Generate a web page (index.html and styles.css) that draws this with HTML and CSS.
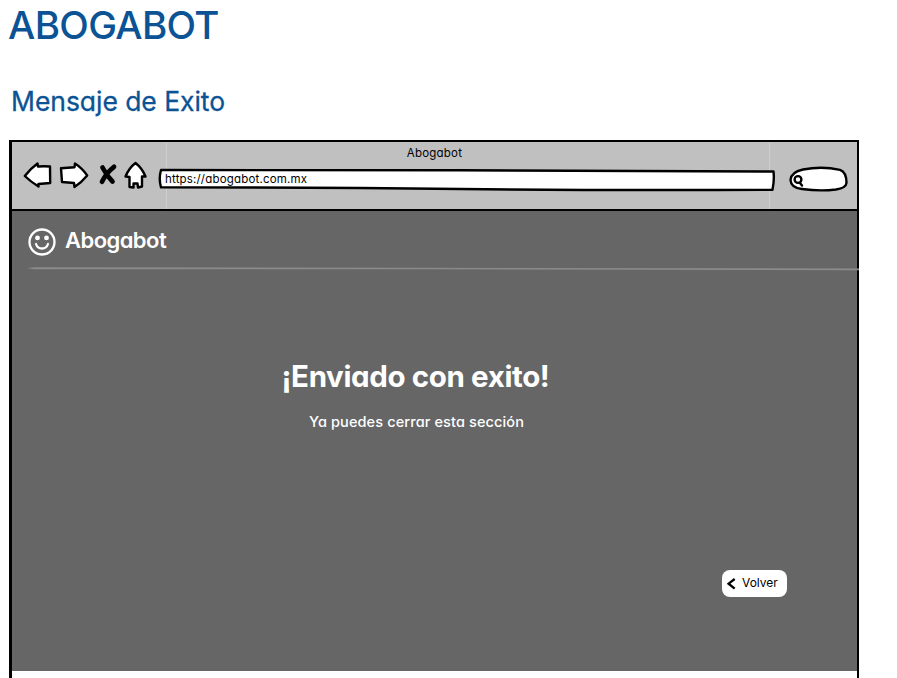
FILE: index.html
```html
<!DOCTYPE html>
<html lang="es">
<head>
<meta charset="utf-8">
<title>Abogabot</title>
<link rel="stylesheet" href="styles.css">
</head>
<body>
<h1 class="doc-title"><span>ABOGABOT</span></h1>
<h2 class="doc-subtitle"><span>Mensaje de Exito</span></h2>
<main class="window">
  <header class="chrome">
    <div class="window-title"><span>Abogabot</span></div>
    <div class="toolbar">
      <svg class="back" width="30" height="32" viewBox="22 160 30 32"><path d="M37.500 163.500 L38 166.500 Q44 166 50 166.500 L50.200 183 L38.500 184 L38.500 186.500 Q31 182 24.800 176 Q30 169 37.500 163.500Z"/></svg>
      <svg class="forward" width="30" height="32" viewBox="59 160 30 32"><path d="M75 163.500 L74.500 167.200 L61 168.200 L62 182 L74 183 L74.500 187 Q81 183 87.200 175.500 Q82 168 75 163.500Z"/></svg>
      <svg class="stop" width="20" height="32" viewBox="98 160 20 32"><path d="M102.500 167.500 Q107 176 112.500 181.500 M114 166.800 Q106 173 102 181.800"/></svg>
      <svg class="home" width="25" height="32" viewBox="123 160 25 32"><path d="M135.500 163 Q129 168 125.500 176.500 L129.500 177 L129.500 187 L133.500 187.500 L133.500 183.500 L137.500 183.500 L138 187.500 L142 186.500 L142 176.500 L145.500 176.500 Q142 168 135.500 163Z"/></svg>
      <div class="address">
        <svg width="618" height="32" viewBox="158 160 618 32"><path d="M161 170 Q310 170 460 170.300 T773.500 171.500 Q774.500 180 772.500 189.800 Q600 190.500 460 189 T161 187.300 Q158.500 179 161 170Z"/></svg>
        <span class="url">https://abogabot.com.mx</span>
      </div>
      <svg class="search" width="60" height="32" viewBox="789 160 60 32"><path d="M803 169.500 Q822 166 840 169.800 Q846.500 172 846.500 183 Q846 188 836 189.500 Q820 191.500 802 189 Q791 188 790.500 180 Q791 172 803 169.500Z"/><circle cx="798" cy="179.500" r="3.400"/><path d="M800 183 L802 185.500"/></svg>
    </div>
  </header>
  <section class="page">
    <div class="brand">
      <svg class="smile" width="28" height="28" viewBox="0 0 28 28"><circle cx="14" cy="14" r="12.500"/><path d="M8 16 Q9.500 20.500 14 20.500 T20 16"/><circle class="eye" cx="9.500" cy="9.900" r="2.400"/><circle class="eye" cx="18.500" cy="9.900" r="2.400"/></svg>
      <span class="brand-name">Abogabot</span>
    </div>
    <svg class="rule" width="832" height="5" viewBox="27 266 832 5"><path d="M27 268 L34 267.200 L420 267.800 L859 268.500 L859 270.300 L420 269.300 L34 269.200Z"/></svg>
    <div class="message">
      <h3 class="headline"><span>¡Enviado con exito!</span></h3>
      <p class="detail"><span>Ya puedes cerrar esta sección</span></p>
    </div>
    <div class="actions">
      <button class="volver"><svg width="9" height="12" viewBox="0 0 9 12"><path d="M7.700 1 L1.600 5.700 L7.700 10.700"/></svg><span>Volver</span></button>
    </div>
  </section>
</main>
</body>
</html>
```
FILE: styles.css
```css
* { box-sizing: border-box; }
html { overflow: hidden; }
body {
  margin: 0;
  height: 678px;
  overflow: hidden;
  background: #fff;
  font-family: Inter, "Open Sans", sans-serif;
  font-feature-settings: "cv11" 1;
}
h1, h2, h3, p { margin: 0; font-weight: 400; white-space: nowrap; }
svg { display: block; flex: none; }
.doc-title {
  height: 50px;
  padding-left: 8px;
  font-size: 38.500px;
  font-weight: 500;
  line-height: 51px;
  letter-spacing: -0.650px;
  color: #0b5394;
}
.doc-subtitle {
  height: 40px;
  margin-top: 31px;
  padding-left: 11px;
  font-size: 26.500px;
  line-height: 40px;
  letter-spacing: -0.050px;
  color: #0b5394;
  -webkit-text-stroke: 0.300px #0b5394;
}
.window {
  width: 850px;
  height: 560px;
  margin: 19px 0 0 9px;
  border: solid #000;
  border-width: 2px 2px 0 3px;
}
.chrome {
  height: 69px;
  border-bottom: 2px solid #000;
  background:
    linear-gradient(#cecece, #cecece) 154px 0 / 1px 100% no-repeat,
    linear-gradient(#cecece, #cecece) 757px 0 / 1px 100% no-repeat,
    #c0c0c0;
}
.window-title {
  height: 18px;
  padding-top: 3px;
  font-size: 11.500px;
  line-height: 16px;
  letter-spacing: 0.200px;
  text-align: center;
}
.toolbar { display: flex; padding-left: 10px; }
.toolbar path, .toolbar circle {
  fill: #fff;
  stroke: #000;
  stroke-width: 2.400;
  stroke-linejoin: round;
  stroke-linecap: round;
}
.forward { margin-left: 7px; }
.stop { margin-left: 9px; }
.toolbar .stop path { stroke-width: 4.700; fill: none; }
.home { margin-left: 5px; }
.address { display: grid; margin-left: 10px; }
.address > * { grid-area: 1 / 1; }
.url {
  padding: 11px 0 0 7px;
  font-size: 11.500px;
  line-height: 17px;
  letter-spacing: 0.180px;
}
.search { margin-left: 13px; }
.page {
  height: 460px;
  background: #666;
  color: #fff;
}
.brand {
  display: flex;
  align-items: center;
  height: 55px;
  padding: 6px 0 0 16px;
}
.smile { fill: none; stroke: #fff; stroke-width: 2.300; stroke-linecap: round; }
.eye { fill: #fff; stroke: none; }
.brand-name {
  margin: -4px 0 0 9px;
  font-size: 22px;
  font-weight: 600;
  line-height: 30px;
  letter-spacing: -0.550px;
}
.rule { margin-left: 15px; fill: #8b8b8b; }
.message { padding-top: 85px; text-align: center; }
.headline { padding-right: 38px; font-size: 29.500px; font-weight: 700; line-height: 40px; letter-spacing: -0.380px; }
.detail { margin-top: 16px; padding-right: 36px; font-size: 14.500px; font-weight: 500; line-height: 20px; letter-spacing: 0.120px; }
.actions { display: flex; justify-content: flex-end; margin-top: 138px; padding-right: 70px; }
.volver {
  display: flex;
  align-items: center;
  width: 65px;
  height: 27px;
  padding: 0 0 0 5px;
  border: 0;
  border-radius: 8px;
  background: #fff;
  color: #000;
  font: inherit;
  font-feature-settings: inherit;
  font-size: 12px;
}
.volver span { margin: -2px 0 0 6px; }
.volver path { fill: none; stroke: #000; stroke-width: 2.300; }
```
